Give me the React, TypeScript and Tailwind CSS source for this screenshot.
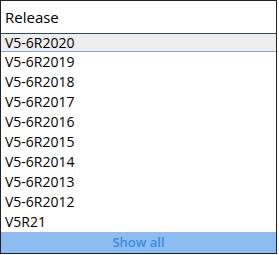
import React from "react";

const releases = [
  "V5-6R2020",
  "V5-6R2019",
  "V5-6R2018",
  "V5-6R2017",
  "V5-6R2016",
  "V5-6R2015",
  "V5-6R2014",
  "V5-6R2013",
  "V5-6R2012",
  "V5R21",
];

export default function App() {
  return (
    <div className="h-[255px] w-[279px] bg-white font-['Open_Sans',sans-serif]">
      <div className="flex h-[254px] w-[277px] flex-col border border-[#222]">
        <div className="flex h-[33px] items-center px-[4px] pt-[1px] text-[15px] text-black">Release</div>
        <div className="flex flex-1 flex-col">
          {releases.map((r, i) => (
            <div
              key={r}
              className={
                i === 0
                  ? "flex h-[19px] items-center border-t border-b border-t-[#2c4a63] border-b-[#7fa9cf] bg-[#ededed] px-[4px] pt-[1px] text-[14px] leading-none text-black"
                  : "flex h-[20px] items-center px-[4px] text-[14px] leading-none text-black"
              }
            >
              {r}
            </div>
          ))}
        </div>
        <div className="flex h-[21px] items-center justify-center bg-[#8cbcf0] text-[13px] font-semibold text-[#3a8de0]">
          Show all
        </div>
      </div>
    </div>
  );
}
